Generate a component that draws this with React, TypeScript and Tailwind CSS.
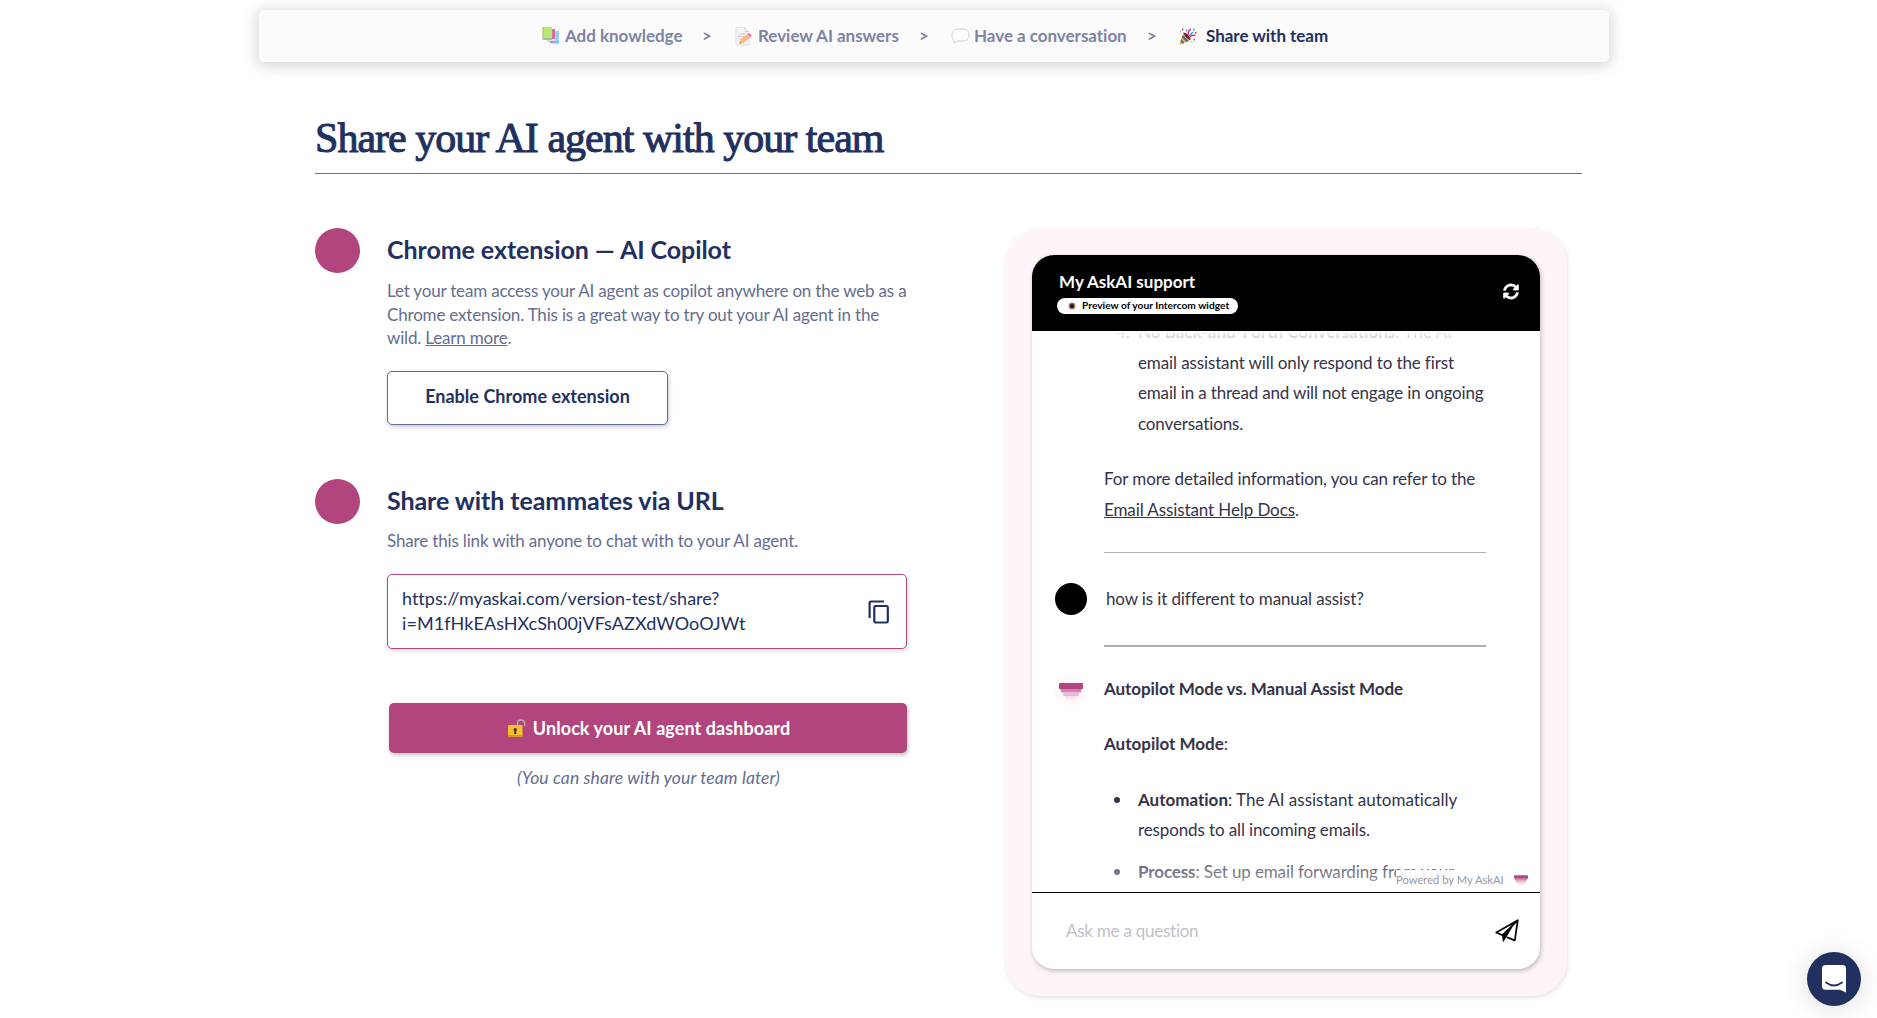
import React from "react";

function Books() {
  return (
    <svg className="h-[18px] w-[18px] shrink-0 opacity-60" viewBox="0 0 18 18">
      <rect x="8" y="4" width="9" height="12" fill="#55b5f5" />
      <path d="M8 14h9v2.500H8z" fill="#3d8fd6" />
      <rect x="5" y="2" width="8" height="12.500" fill="#c2185b" />
      <path d="M5 12h8v2H5z" fill="#e3c3d2" />
      <path d="M1 0h9v11H1z" fill="#8fdc1c" />
      <path d="M1 11h9v2H2z" fill="#5f9e58" />
      <path d="M0.500 0h1v13h-1z" fill="#5c9b14" />
    </svg>
  );
}

function Memo() {
  return (
    <svg className="h-[19px] w-[18px] shrink-0 opacity-60" viewBox="0 0 18 19">
      <path d="M1 .5h9l4 4v13.500H1z" fill="#f3eef8" stroke="#cfc5d8" strokeWidth=".8" />
      <path d="M10 .5v4h4M3 7h8M3 9.500h7M3 12h4" fill="none" stroke="#b9adc4" strokeWidth=".9" />
      <path d="M4.500 17l1-4.500 6-5 3 3.500-6 5z" fill="#ff8a1f" />
      <path d="M4.500 17l.5-2 1.500 1.300z" fill="#433" />
      <path d="M12 7.500l1.500-1.200c2-.8 4 1.600 2.700 3.200L15 10.800z" fill="#f0317a" />
    </svg>
  );
}

function Bubble() {
  return (
    <svg className="h-[16px] w-[19px] shrink-0" viewBox="0 0 19 16">
      <path
        d="M7 1h5c3.500 0 6 2.500 6 6s-2.500 6-6 6H6.500L3 14.800V12C1.700 10.800 1 9 1 7c0-3.500 2.500-6 6-6z"
        fill="#fdfdfd"
        stroke="#d0cfd3"
        strokeWidth="1"
      />
    </svg>
  );
}

function Party() {
  return (
    <svg className="h-[17px] w-[18px] shrink-0" viewBox="0 0 18 17">
      <path d="M4.500 4.500c4 1 6.500 4 7 7.500L1.500 16.500l-1-1z" fill="#f5b52e" />
      <path d="M3.800 7l5.700 6-2 .9-4.600-4.500zM2.200 11.200l3.200 3.700-1.700.8-2.200-2.600z" fill="#3d62d8" />
      <path d="M4.500 4.500c3.500.5 7 4 7 7.500-3-.5-6.500-4-7-7.500z" fill="#6b2431" />
      <path d="M9 7c0-2 .3-4.500 3-6M11 9c1.500-2 3.500-2 5.500-1.500" stroke="#e8257b" strokeWidth="1.400" fill="none" />
      <path d="M10 8l4-4" stroke="#2da0f0" strokeWidth="1.600" />
      <path d="M7 1.500h1.500v2H7zM14 .8h1.600v1.600H14z" fill="#2da0f0" />
      <path d="M3 .7h1.500v1.600H3zM16 4h1.500v1.500H16zM14.500 11H16v1.500h-1.500z" fill="#e8257b" />
      <path d="M1 3h1.300v1.300H1zM12 13h1.500v1.300H12z" fill="#f5b52e" />
    </svg>
  );
}

function OpenLock() {
  return (
    <svg className="h-[18px] w-[18px] shrink-0" viewBox="0 0 18 18">
      <path d="M9.500 6V4.500C9.500 2.300 11 1 13 1s3.700 1.300 3.700 3.500V7" fill="none" stroke="#b9a9b5" strokeWidth="1.500" />
      <rect x="0" y="6" width="14.500" height="12" rx="1.200" fill="#f6c12d" />
      <path d="M0 16h14.500v.8a1.200 1.200 0 0 1-1.200 1.200H1.200A1.200 1.200 0 0 1 0 16.800z" fill="#d99a36" />
      <path d="M7.200 9a1.800 1.800 0 0 1 1 3.200V15h-2v-2.800a1.800 1.800 0 0 1 1-3.200z" fill="#4a3140" />
    </svg>
  );
}

function Logo({ className }: { className: string }) {
  return (
    <svg className={className} viewBox="0 0 24 18">
      <rect x="0" y="0" width="24" height="6" rx=".8" fill="#b2457e" />
      <path d="M1.500 6h21l-.8 3.500H2.300z" fill="#cf86ad" />
      <path d="M3.500 9.500h17L19.300 13H4.700z" fill="#e7bcd2" />
      <path d="M5.500 13h13l-1.500 3H7z" fill="#f6e2ec" />
    </svg>
  );
}

const Chevron = () => <span className="w-2 text-center">&gt;</span>;

function TopBar() {
  return (
    <nav className="mt-[10px] ml-[259px] flex h-[52px] w-[1350px] items-center rounded-[5px] bg-[#fbfbfb] pl-[283px] text-[17px] font-bold tracking-[-0.03px] text-[#7d84a4] shadow-[0_2px_14px_3px_rgba(0,0,0,0.15)]">
      <div className="flex w-[160px] items-center gap-[5px] whitespace-nowrap"><Books />Add knowledge</div>
      <Chevron />
      <div className="ml-[25px] flex w-[184px] items-center gap-[5px] whitespace-nowrap"><Memo />Review AI answers</div>
      <Chevron />
      <div className="ml-[24px] flex w-[196px] items-center gap-[4px] whitespace-nowrap"><Bubble />Have a conversation</div>
      <Chevron />
      <div className="ml-[24px] flex items-center gap-[9px] whitespace-nowrap text-[#22305f]"><Party />Share with team</div>
    </nav>
  );
}

function Steps() {
  return (
    <div className="w-[593px] text-[#22305f]">
      <section className="flex h-[251px] gap-[27px]">
        <div className="h-[45px] w-[45px] shrink-0 rounded-full bg-[#b2457e]" />
        <div className="w-[521px]">
          <h2 className="h-[51px] pt-[3px] text-[25px] leading-[36px] font-bold tracking-[-0.07px] whitespace-nowrap">Chrome extension — AI Copilot</h2>
          <p className="text-[17px] leading-[23.500px] tracking-[-0.18px] whitespace-nowrap text-[#646d90]">
            Let your team access your AI agent as copilot anywhere on the web as a<br />
            Chrome extension. This is a great way to try out your AI agent in the<br />
            wild. <a className="underline">Learn more</a>.
          </p>
          <button className="mt-[21px] h-[54px] w-[281px] rounded-[5px] border border-[#646d99] bg-white pb-[2px] text-[18px] font-bold tracking-[0.02px] shadow-[1px_2px_4px_rgba(0,0,0,0.2)]">
            Enable Chrome extension
          </button>
        </div>
      </section>
      <section className="flex gap-[27px]">
        <div className="h-[45px] w-[45px] shrink-0 rounded-full bg-[#b2457e]" />
        <div className="w-[520px]">
          <h2 className="h-[50px] pt-[3px] text-[25px] leading-[36px] font-bold tracking-[-0.07px] whitespace-nowrap">Share with teammates via URL</h2>
          <p className="text-[17px] leading-[24px] tracking-[-0.16px] whitespace-nowrap text-[#646d90]">Share this link with anyone to chat with to your AI agent.</p>
          <div className="mt-[21px] flex h-[75px] items-center justify-between rounded-[5px] border border-[#b2457e] bg-white pr-[16px] pl-[14px] shadow-[1px_2px_4px_rgba(0,0,0,0.15)]">
            <p className="pb-[1px] text-[18px] leading-[25px]">https://myaskai.com/version-test/share?<br /><span className="tracking-[0.07px]">i=M1fHkEAsHXcSh00jVFsAZXdWOoOJWt</span></p>
            <svg className="h-[24px] w-[22px]" viewBox="0 0 22 24" fill="none" stroke="#22305f" strokeWidth="2.200">
              <path d="M1.600 18V3q0-1.500 1.500-1.500H16" />
              <rect x="6.300" y="6" width="13.500" height="16.500" rx="1.200" />
            </svg>
          </div>
          <button className="mt-[54px] ml-[2px] flex h-[50px] w-[518px] items-center justify-center gap-[7px] rounded-[5px] bg-[#b2457e] pl-[2px] text-[18px] font-bold tracking-[0.07px] text-white shadow-[1px_2px_4px_rgba(0,0,0,0.25)]">
            <OpenLock />Unlock your AI agent dashboard
          </button>
          <p className="mt-[12px] pl-[3px] text-center text-[17.500px] leading-[25px] tracking-[0.1px] text-[#646d90] italic">(You can share with your team later)</p>
        </div>
      </section>
    </div>
  );
}

function ChatPreview() {
  return (
    <div className="h-[768px] w-[562px] rounded-[35px] bg-[#fef5fa] pt-[27px] pl-[27px] shadow-[1px_2px_4px_rgba(0,0,0,0.1)]">
      <div className="flex h-[714px] w-[508px] flex-col overflow-hidden rounded-[22px] bg-white shadow-[1px_2px_5px_rgba(0,0,0,0.25)]">
        <header className="flex h-[76px] shrink-0 items-center justify-between bg-black pr-[21px] pb-[3px] pl-[25px] text-white">
          <div>
            <h3 className="pl-[2px] text-[17px] leading-[24px] font-bold">My AskAI support</h3>
            <div className="mt-[4px] flex h-[16px] w-[181px] items-center gap-[5px] rounded-full bg-white pl-[10px] text-[10.200px] font-bold whitespace-nowrap text-black">
              <svg className="h-[10px] w-[10px]" viewBox="0 0 10 10">
                <circle cx="5" cy="5" r="4.600" fill="#e6e2e8" />
                <circle cx="5" cy="5" r="2.900" fill="#7a4a3c" />
                <circle cx="5" cy="5" r="1.700" fill="#1c1013" />
              </svg>
              Preview of your Intercom widget
            </div>
          </div>
          <svg className="h-[17px] w-[16px]" viewBox="0 0 512 512" fill="white" stroke="white" strokeWidth="10">
            <path d="M370.700 133.300C339.500 104 298.900 88 255.800 88c-77.500.1-144.300 53.200-162.800 126.900-1.300 5.400-6.100 9.200-11.700 9.200H24.100c-7.500 0-13.200-6.800-11.800-14.200C33.900 94.900 134.800 8 256 8c66.400 0 126.800 26.100 171.300 68.700L463 41C478.100 25.900 504 36.600 504 57.900V192c0 13.300-10.700 24-24 24H345.900c-21.400 0-32.100-25.900-17-41zM32 296h134.100c21.400 0 32.100 25.900 17 41l-41.800 41.800c31.300 29.300 71.800 45.300 114.900 45.200 77.400-.1 144.300-53.100 162.800-126.800 1.300-5.400 6.100-9.200 11.700-9.200h57.300c7.500 0 13.200 6.800 11.800 14.200C478.100 417.100 377.200 504 256 504c-66.400 0-126.800-26.100-171.300-68.700L49 471c-15.100 15.100-41 4.400-41-16.900V320c0-13.300 10.700-24 24-24z" />
          </svg>
        </header>
        <div className="relative h-[561px] shrink-0 overflow-hidden text-[17px] leading-[30.500px] tracking-[-0.12px] whitespace-nowrap text-[#35334a]">
          <div className="-mt-[14px] flex pl-[84px]">
            <span className="w-[22px]">4.</span>
            <p>
              <span className="tracking-[0.02px]"><b>No Back-and-Forth Conversations</b>: The AI</span><br />
              email assistant will only respond to the first<br />
              <span className="tracking-[-0.17px]">email in a thread and will not engage in ongoing</span><br />
              conversations.
            </p>
          </div>
          <p className="mt-[25px] ml-[72px] tracking-[-0.1px]">
            For more detailed information, you can refer to the<br />
            <a className="underline">Email Assistant Help Docs</a>.
          </p>
          <hr className="mt-[27px] ml-[72px] w-[382px] border-[#b0aeb0]" />
          <div className="mt-[30px] flex h-[32px] items-center gap-[19px] pl-[23px]">
            <div className="h-[32px] w-[32px] rounded-full bg-black" />
            how is it different to manual assist?
          </div>
          <hr className="mt-[30px] ml-[72px] w-[382px] border-t-2 border-[#b0aeb0]" />
          <div className="mt-[26px] flex h-[33px] items-center gap-[17px] pl-[23px]">
            <div className="flex h-[32px] w-[32px] items-center justify-center rounded-full bg-[#fff9fb] pt-[4px]">
              <Logo className="h-[18px] w-[24px]" />
            </div>
            <b className="tracking-[-0.06px]">Autopilot Mode vs. Manual Assist Mode</b>
          </div>
          <p className="mt-[23px] ml-[72px] tracking-normal"><b>Autopilot Mode</b>:</p>
          <ul className="mt-[25px] ml-[82px]">
            <li className="flex gap-[18px]">
              <i className="mt-[12px] h-[6px] w-[6px] shrink-0 rounded-full bg-[#35334a]" />
              <p><span className="tracking-normal"><b>Automation</b>: The AI assistant automatically</span><br />responds to all incoming emails.</p>
            </li>
            <li className="mt-[11px] flex gap-[18px]">
              <i className="mt-[12px] h-[6px] w-[6px] shrink-0 rounded-full bg-[#35334a]" />
              <p><b>Process</b>: Set up email forwarding from your</p>
            </li>
          </ul>
          <div className="absolute inset-x-0 top-0 h-[24px] bg-linear-to-b from-white via-white/75 via-30% to-white/60" />
          <div className="absolute inset-x-0 bottom-0 h-[44px] bg-linear-to-t from-white/60 to-transparent" />
          <div className="absolute right-0 bottom-0 flex h-[22px] w-[144px] items-center gap-[10px] bg-white/90 pb-[2px] text-[11.200px] leading-[14px] tracking-normal text-[#9a98a3]">
            Powered by My AskAI
            <Logo className="h-[11px] w-[14px]" />
          </div>
        </div>
        <footer className="flex grow items-center justify-between border-t border-black pr-[21px] pl-[34px] text-[17px] tracking-[-0.25px] text-[#bfbfc6]">
          <span>Ask me a question</span>
          <svg className="h-[24px] w-[24px]" viewBox="0 0 24 24">
            <path d="M22.800 1.200L1.300 13.500l6.200 2.800L22.800 1.200l-3 20.200-8-3.200" fill="none" stroke="#000" strokeWidth="1.700" strokeLinejoin="round" />
            <path d="M7 15.500L18 7l-6.500 11-3.500 5.200z" fill="#000" />
          </svg>
        </footer>
      </div>
    </div>
  );
}

export default function App() {
  return (
    <div className="relative flex h-[1018px] w-[1877px] flex-col overflow-hidden bg-white font-['Lato',sans-serif] [font-variant-ligatures:none]">
      <TopBar />
      <h1 className="mt-[48px] ml-[315px] h-[64px] w-[1267px] border-b border-[#646d99] font-['Liberation_Serif',serif] text-[42px] leading-[56px] tracking-[-0.98px] whitespace-nowrap text-[#22305f] [-webkit-text-stroke:1px_#22305f]">
        Share your AI agent with your team
      </h1>
      <main className="mt-[54px] ml-[315px] flex gap-[97px]">
        <Steps />
        <ChatPreview />
      </main>
      <button className="absolute top-[952px] left-[1807px] flex h-[54px] w-[54px] items-center justify-center rounded-full bg-[#22305f] shadow-[0_2px_26px_rgba(0,0,0,0.14)]">
        <svg className="h-[28px] w-[24px]" viewBox="0 0 24 28">
          <path d="M3.500 0h17A3.500 3.500 0 0 1 24 3.500V27.500l-6-2.700H3.500A3.500 3.500 0 0 1 0 21.300V3.500A3.500 3.500 0 0 1 3.500 0z" fill="white" />
          <path d="M4 17.500q8 6 16 0" fill="none" stroke="#22305f" strokeWidth="1.800" strokeLinecap="round" />
        </svg>
      </button>
    </div>
  );
}
